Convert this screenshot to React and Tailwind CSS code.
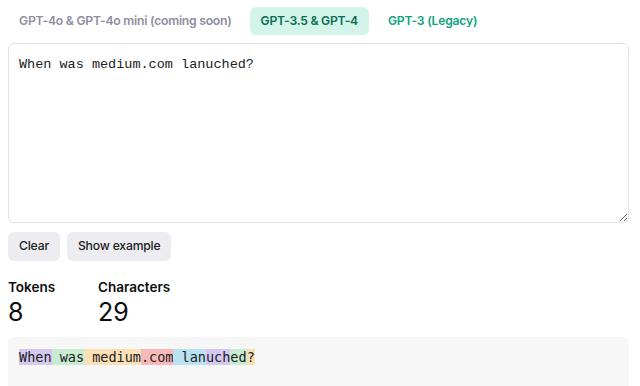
import React from "react";

const tokens = [
  { t: "When", c: "bg-[#d5c9f1]" },
  { t: " was", c: "bg-[#c8ecd1]" },
  { t: " medium", c: "bg-[#fbe0b5]" },
  { t: ".com", c: "bg-[#f6b9b8]" },
  { t: " lan", c: "bg-[#b9e2f3]" },
  { t: "uch", c: "bg-[#d5c9f1]" },
  { t: "ed", c: "bg-[#c8ecd1]" },
  { t: "?", c: "bg-[#fbe0b5]" },
];

export default function App() {
  return (
    <div className="w-[640px] h-[386px] overflow-hidden bg-white px-2 pt-[7px] font-['Inter',sans-serif]">
      <div className="flex items-center h-[28px] text-[12.2px] font-semibold tracking-[-0.25px]">
        <div className="px-[11px] h-[28px] flex items-center text-[#8e8ea0]">GPT-4o &amp; GPT-4o mini (coming soon)</div>
        <div className="ml-[7px] px-[11px] h-[28px] flex items-center rounded-md bg-[#d2f4e9] text-[#0b6e55]">GPT-3.5 &amp; GPT-4</div>
        <div className="ml-[8px] px-[11px] h-[28px] flex items-center text-[#10a37f]">GPT-3 (Legacy)</div>
      </div>
      <textarea
        className="mt-2 block w-[621px] h-[180px] border border-[#e3e3e6] rounded-md px-[10px] py-[11px] text-[13.5px] leading-[20px] text-[#202123] font-['Liberation_Mono',monospace] outline-none"
        defaultValue="When was medium.com lanuched?"
      />
      <div className="flex gap-[7px] mt-[9px]">
        <button className="h-[29px] px-[11px] rounded-md bg-[#ececf1] text-[12.2px] tracking-[-0.2px] font-medium text-[#202123]">Clear</button>
        <button className="h-[29px] px-[11px] rounded-md bg-[#ececf1] text-[12.2px] tracking-[-0.2px] font-medium text-[#202123]">Show example</button>
      </div>
      <div className="flex mt-[17px] text-[#0d0d0d]">
        <div className="w-[90px]">
          <div className="text-[13.5px] font-semibold leading-[18px]">Tokens</div>
          <div className="text-[25px] leading-[30px] mt-[1px]">8</div>
        </div>
        <div>
          <div className="text-[13.5px] font-semibold leading-[18px]">Characters</div>
          <div className="text-[25px] leading-[30px] mt-[1px]">29</div>
        </div>
      </div>
      <div className="mt-[10px] w-[621px] h-[60px] bg-[#f7f7f8] px-[11px] pt-[11px] rounded-t-md">
        <div className="text-[13.5px] leading-[18px] text-[#202123] font-['DejaVu_Sans_Mono',monospace] whitespace-pre">
          {tokens.map((k, i) => (
            <span key={i} className={k.c}>{k.t}</span>
          ))}
        </div>
      </div>
    </div>
  );
}
